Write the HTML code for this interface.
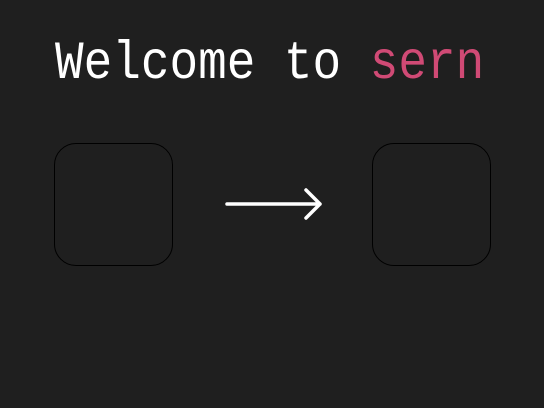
<!DOCTYPE html>
<html><head><style>
html,body{margin:0;padding:0;}
body{width:544px;height:408px;background:#1f1f1f;position:relative;overflow:hidden;}
.t{position:absolute;left:55px;top:82px;font-family:"Liberation Mono",monospace;font-size:47.7px;color:#fff;white-space:pre;line-height:1;transform-origin:0 100%;transform:translateY(-100%) scaleY(1.12);margin-top:10px;}
.t span{color:#d04a75;}
.b{position:absolute;top:143px;width:117px;height:121px;border:1px solid #000;border-radius:22px;box-sizing:content-box;}
</style></head><body>
<div class="t">Welcome to <span>sern</span></div>
<div class="b" style="left:54px"></div>
<div class="b" style="left:372px"></div>
<svg style="position:absolute;left:0;top:0" width="544" height="408">
<path d="M227 204H320M306 190L320 204L306 218" stroke="#fff" stroke-width="3.5" fill="none" stroke-linecap="round" stroke-linejoin="round"/>
</svg>
</body></html>
